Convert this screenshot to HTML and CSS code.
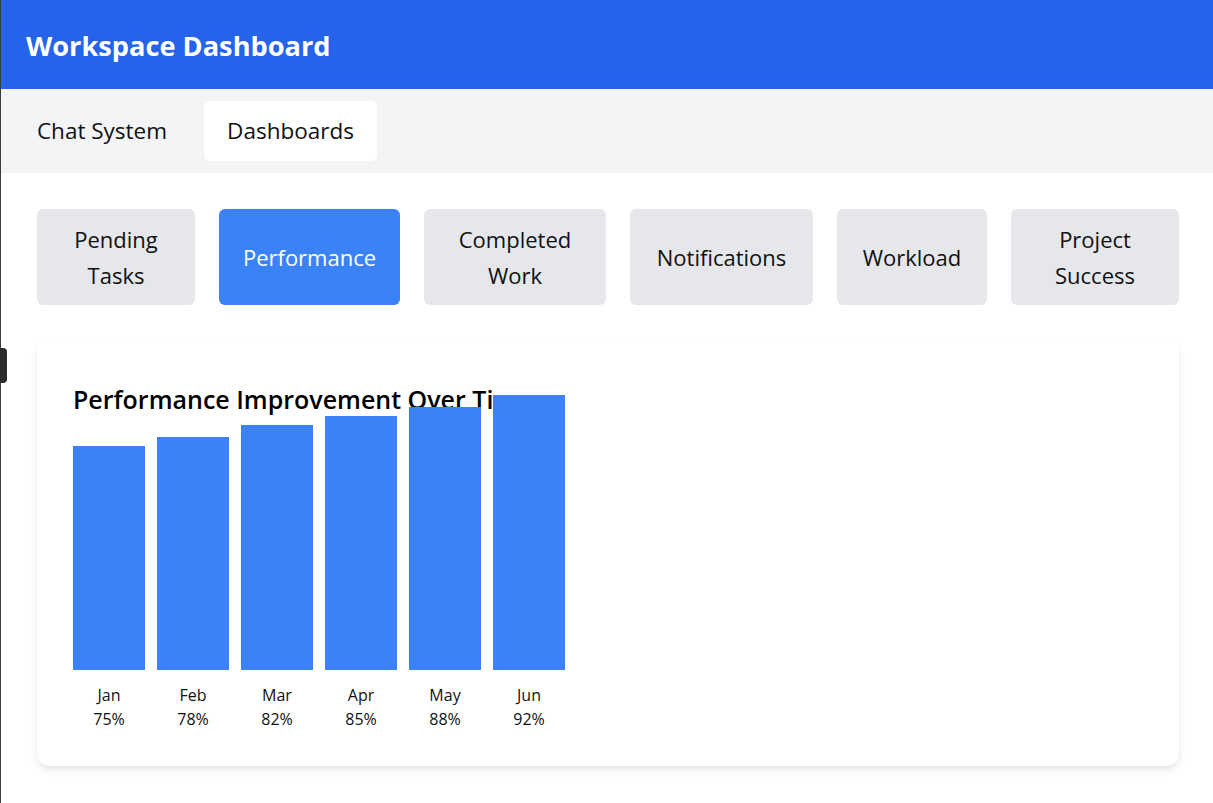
FILE: index.html
```html
<!DOCTYPE html>
<html lang="en">
<head>
<meta charset="utf-8">
<title>Workspace Dashboard</title>
<link rel="stylesheet" href="styles.css">
</head>
<body>
<div class="edge-line"></div>
<div class="edge-tab"></div>
<header class="app-header">
  <h1 class="app-title">Workspace Dashboard</h1>
</header>
<nav class="top-nav">
  <button class="nav-btn nav-chat">Chat System</button>
  <button class="nav-btn nav-dash active">Dashboards</button>
</nav>
<main class="main">
  <div class="tabs">
    <button class="tab">Pending Tasks</button>
    <button class="tab active">Performance</button>
    <button class="tab">Completed Work</button>
    <button class="tab">Notifications</button>
    <button class="tab">Workload</button>
    <button class="tab">Project Success</button>
  </div>
  <section class="card">
    <h2 class="card-title">Performance Improvement Over Time</h2>
    <div class="chart">
      <div class="col"><div class="bar" style="height:224px"></div><div class="label">Jan<br>75%</div></div>
      <div class="col"><div class="bar" style="height:233px"></div><div class="label">Feb<br>78%</div></div>
      <div class="col"><div class="bar" style="height:245px"></div><div class="label">Mar<br>82%</div></div>
      <div class="col"><div class="bar" style="height:254px"></div><div class="label">Apr<br>85%</div></div>
      <div class="col"><div class="bar" style="height:263px"></div><div class="label">May<br>88%</div></div>
      <div class="col"><div class="bar" style="height:275px"></div><div class="label">Jun<br>92%</div></div>
    </div>
  </section>
</main>
</body>
</html>
```
FILE: styles.css
```css
* { box-sizing: border-box; }

html, body {
  margin: 0;
  padding: 0;
  background: #ffffff;
}

body {
  font-family: "Open Sans", "Noto Sans", sans-serif;
  color: #111111;
  width: 1213px;
  height: 803px;
  overflow: hidden;
}

.edge-line {
  position: fixed;
  left: 0;
  top: 0;
  width: 1px;
  height: 100%;
  background: #3d3d3d;
  z-index: 10;
}

.edge-tab {
  position: fixed;
  left: 0;
  top: 348px;
  width: 7px;
  height: 35px;
  background: #2b2b2b;
  border-radius: 0 4px 4px 0;
  z-index: 10;
}

.app-header {
  background: #2563eb;
  height: 89px;
  padding: 0 26px;
  display: flex;
  align-items: center;
}

.app-title {
  margin: 0;
  color: #ffffff;
  font-size: 27.2px;
  font-weight: 700;
  line-height: 40px;
  padding-top: 2px;
}

.top-nav {
  background: #f3f4f6;
  height: 84px;
  padding: 12px 13px;
  display: flex;
  gap: 13px;
}

.nav-btn {
  font-family: inherit;
  font-size: 22.5px;
  line-height: 36px;
  color: #111111;
  background: transparent;
  border: 0;
  border-radius: 6px;
  padding: 12px 0;
  height: 60px;
  text-align: center;
  cursor: pointer;
}

.nav-chat { width: 178px; }
.nav-dash { width: 173px; }

.nav-btn.active {
  background: #ffffff;
}

.main {
  padding: 36px 34px 0 37px;
}

.tabs {
  display: grid;
  grid-template-columns: 158px 181px 182px 183px 150px 168px;
  gap: 24px;
}

.tab {
  font-family: inherit;
  font-size: 22px;
  line-height: 36px;
  color: #111111;
  background: #e5e7eb;
  border: 0;
  border-radius: 6px;
  height: 96px;
  padding: 12px 20px;
  text-align: center;
  cursor: pointer;
}

.tab.active {
  background: #3b82f6;
  color: #ffffff;
}

.card {
  margin-top: 35px;
  height: 426px;
  background: #ffffff;
  border-radius: 12px;
  box-shadow: 0 4px 8px -1px rgba(0, 0, 0, 0.1), 0 2px 5px -2px rgba(0, 0, 0, 0.08);
  padding: 41px 36px 35px 36px;
}

.card-title {
  margin: 0;
  font-size: 25px;
  font-weight: 600;
  line-height: 36px;
  height: 36px;
  color: #000000;
  white-space: nowrap;
}

.chart {
  height: 314px;
  display: flex;
  align-items: flex-end;
  gap: 12px;
}

.col {
  width: 72px;
  display: flex;
  flex-direction: column;
}

.bar {
  background: #3b82f6;
  width: 72px;
}

.label {
  margin-top: 13px;
  font-size: 16px;
  line-height: 24px;
  text-align: center;
  color: #111111;
}
```
